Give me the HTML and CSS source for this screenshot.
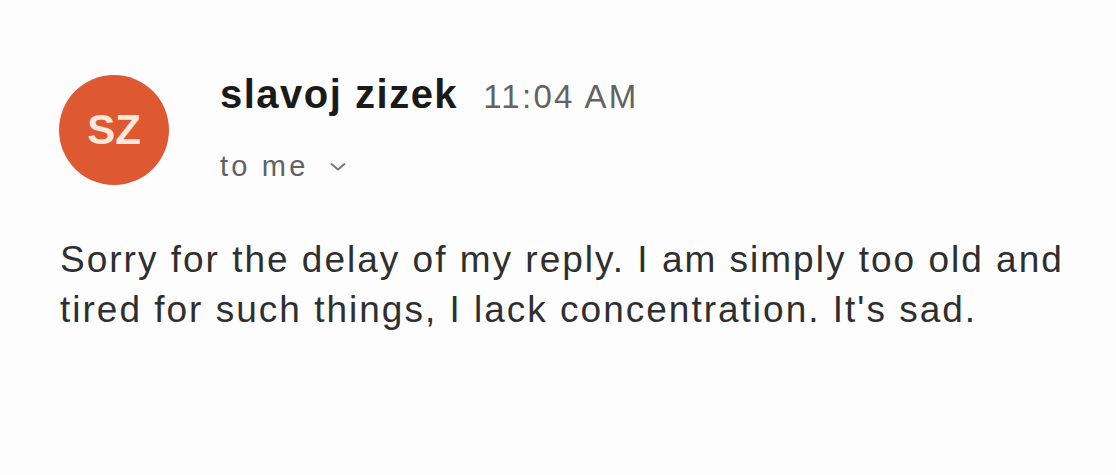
FILE: index.html
```html
<!DOCTYPE html>
<html lang="en">
<head>
<meta charset="utf-8">
<title>Email</title>
<link rel="stylesheet" href="styles.css">
</head>
<body>
<div class="mail">
  <div class="header">
    <div class="avatar">SZ</div>
    <div class="meta">
      <div class="from-line">
        <span class="sender">slavoj zizek</span>
        <span class="time">11:04 AM</span>
      </div>
      <div class="to-line">
        <span class="to">to me</span>
        <svg class="chev" width="18" height="10" viewBox="0 0 18 10" aria-hidden="true">
          <path d="M2.5 2 L9 7.5 L15.5 2" fill="none" stroke="#777" stroke-width="1.9" stroke-linecap="round" stroke-linejoin="round"/>
        </svg>
      </div>
    </div>
  </div>
  <p class="body">Sorry for the delay of my reply. I am simply too old and tired for such things, I lack concentration. It's sad.</p>
</div>
</body>
</html>
```

FILE: styles.css
```css
html, body {
  margin: 0;
  padding: 0;
  background: #fdfdfd;
}
body {
  width: 1116px;
  height: 475px;
  overflow: hidden;
  font-family: "Liberation Sans", Arial, sans-serif;
}
.mail {
  padding: 72px 0 0 59px;
}
.header {
  display: flex;
  align-items: flex-start;
  gap: 51px;
}
.avatar {
  width: 110px;
  height: 110px;
  margin-top: 3px;
  border-radius: 50%;
  background: #de5832;
  color: #fde6da;
  font-weight: bold;
  font-size: 42px;
  display: flex;
  align-items: center;
  justify-content: center;
  flex-shrink: 0;
}
.meta {
  display: flex;
  flex-direction: column;
}
.from-line {
  display: flex;
  align-items: baseline;
  gap: 25px;
  line-height: 44px;
}
.sender {
  font-size: 40px;
  font-weight: bold;
  letter-spacing: 1.5px;
  color: #1a1a1a;
}
.time {
  font-size: 33px;
  letter-spacing: 2.3px;
  color: #636363;
}
.to-line {
  margin-top: 31px;
  display: flex;
  align-items: center;
  gap: 20px;
  line-height: 32px;
}
.to {
  font-size: 29px;
  letter-spacing: 3.2px;
  color: #626262;
}
.chev {
  margin-top: 2px;
}
.body {
  margin: 50px 0 0 1px;
  width: 1040px;
  font-size: 37px;
  line-height: 50px;
  letter-spacing: 2px;
  color: #2f2f2f;
}
```
